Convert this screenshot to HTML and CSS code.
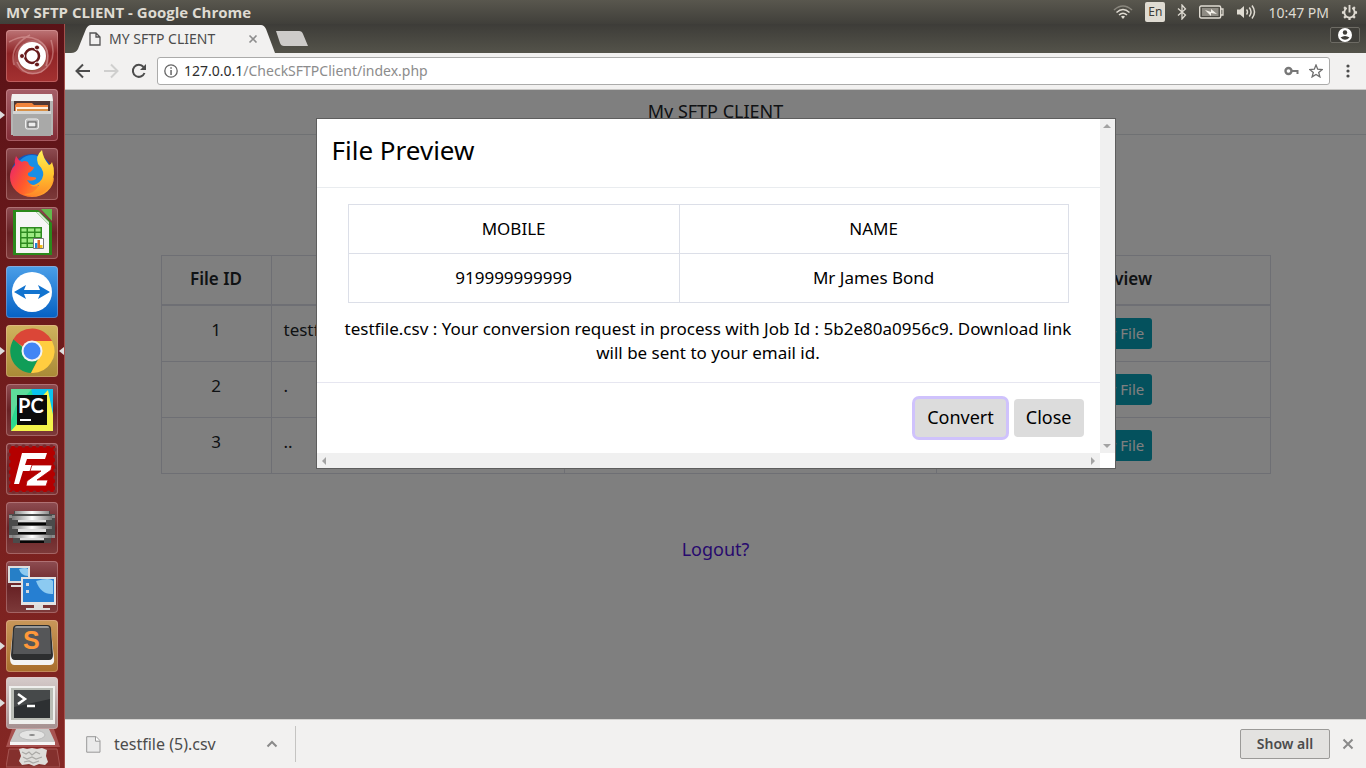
FILE: index.html
```html
<!DOCTYPE html>
<html lang="en">
<head>
<meta charset="utf-8">
<title>MY SFTP CLIENT</title>
<link rel="stylesheet" href="styles.css">
</head>
<body>
<header class="panel">
  <span class="panel-title">MY SFTP CLIENT - Google Chrome</span>
  <div class="indicators">
    <svg width="20" height="16" viewBox="0 0 20 16" fill="none" stroke="#dfdbd2" stroke-width="1.6"><path d="M1 6Q10-2 19 6" stroke="#8a877e"/><path d="M3.500 8.500Q10 2.500 16.500 8.500M6 11Q10 7.500 14 11"/><path d="M8 12.500Q10 11 12 12.500L10 15z" fill="#dfdbd2" stroke="none"/></svg>
    <span class="lang">En</span>
    <svg width="10" height="16" viewBox="0 0 10 16" fill="none" stroke="#dfdbd2" stroke-width="1.300"><path d="M1 4.500 8.500 11 5 15V1l3.500 4L1 11.500"/></svg>
    <svg width="25" height="14" viewBox="0 0 25 14"><rect x=".7" y="1" width="21" height="12" rx="1.500" fill="none" stroke="#dfdbd2" stroke-width="1.400"/><rect x="3" y="3" width="16.500" height="8" fill="#8e8b83"/><path d="M22 4h2v6h-2" fill="none" stroke="#dfdbd2" stroke-width="1.300"/><path d="M6 5l6 2V4l6 5-6-1v3z" fill="#f2efe8"/></svg>
    <svg width="20" height="16" viewBox="0 0 20 16" fill="none" stroke="#dfdbd2" stroke-width="1.500"><path d="M1 5.500h3L8 2v12l-4-3.500H1z" fill="#dfdbd2" stroke="none"/><path d="M10.500 5.500q2 2.500 0 5M13.300 3.500q3.500 4.500 0 9M16 1.500q5 6.500 0 13"/></svg>
    <time class="clock">10:47 PM</time>
    <svg width="17" height="17" viewBox="0 0 18 18" fill="none" stroke="#dfdbd2"><path d="M6 4.300a5.500 5.500 0 1 0 6 0" stroke-width="2"/><path d="M9 1v8" stroke-width="2"/><path d="M1 9h2.500M14.500 9H17M9 14.500V17M3.300 3.300l2 2M14.700 3.300l-2 2M3.300 14.700l2-2M14.700 14.700l-2-2" stroke-width="2.400"/></svg>
  </div>
</header>
<div class="desktop">
  <nav class="launcher" aria-label="Launcher">
    <button class="tile ubuntu" aria-label="Dash"><svg viewBox="0 0 52 52"><g fill="none" stroke="#e9b4b2" stroke-opacity=".45" stroke-width="1.500"><path d="M3 12Q18 3 32 10 46 18 40 36M8 35Q3 16 24 5M45 10Q52 32 35 42 18 48 11 32"/></g><path d="M8 35Q6 15 26 10 46 10 42 36 35 48 16 42z" fill="#fff" opacity=".16"/><circle cx="26" cy="27" r="14" fill="#752" opacity=".4"/><circle cx="26" cy="26" r="14" fill="#fff"/><circle cx="26" cy="26" r="7" fill="none" stroke="#67191a" stroke-width="2.600"/><g fill="#67191a" stroke="#fff" stroke-width="1"><circle cx="16" cy="26" r="2.500"/><circle cx="31" cy="17.500" r="2.500"/><circle cx="31" cy="34.500" r="2.500"/></g></svg></button>
    <button class="tile files running" aria-label="Files"><svg viewBox="0 0 52 52"><path d="M6 5h40l1 7v34H5V12z" fill="#b5b5b4"/><path d="M6 5h40l1 7H5z" fill="#f1f1f0"/><path d="M8 12h36v12H8z" fill="#4f3835"/><path d="M9 16l2-2h15l2 2h14v7H9z" fill="#f0843c"/><path d="M10 18h32v5H10z" fill="#fff0df"/><path d="M11 20h31v3H11z" fill="#d89147"/><path d="M7 22h38v25H7z" fill="#a9a9a8"/><path d="M7 22h38v3H7z" fill="#d5d5d4"/><rect x="19.500" y="30" width="13" height="10" rx="2" fill="#bbb" stroke="#eee"/><rect x="22" y="33" width="8" height="5" fill="#ececec" stroke="#555"/></svg></button>
    <button class="tile" aria-label="Firefox"><svg viewBox="0 0 52 52">
      <defs><linearGradient id="fox" x1="0" y1=".3" x2="1" y2=".8"><stop offset="0" stop-color="#ee2a63"/><stop offset=".4" stop-color="#ff5a2b"/><stop offset="1" stop-color="#ffb42a"/></linearGradient><linearGradient id="flame" x1="0" y1="0" x2="0" y2="1"><stop offset="0" stop-color="#fff05a"/><stop offset=".5" stop-color="#ffc72e"/><stop offset="1" stop-color="#ff8a28"/></linearGradient></defs>
      <circle cx="26" cy="27" r="21" fill="#1457bd"/><circle cx="26" cy="23" r="16" fill="#188fe6"/>
      <path d="M10 8q-2 5-1 9-5 5-5 12a22 20 0 0 0 44 0q-4 8-14 9-10 0-13-6 5 2 9-1 1-2-3-2-6 0-5-4 5-2 6-6-5 0-6-5-4-2-6 0-4-2-6-6z" fill="url(#fox)"/>
      <path d="M36 2q-7 6-4 14 8 8 4 15-5 7-12 6 4 3 9 0-5 10-16 9Q34 51 44 38q7-12 2-24-1 3-3 3-6-7-7-15z" fill="url(#flame)"/>
    </svg></button>
    <button class="tile" aria-label="LibreOffice Calc"><svg viewBox="0 0 52 52"><path d="M7 3h25l14 13v32H7z" fill="#2b8a1c"/><path d="M10 5h20l13 13v28H10z" fill="#f6f6f6"/><path d="M35 2h11v12z" fill="#62b84c"/><path d="M30 5l13 13V15L33 5z" fill="#d5e8d2"/><path d="M14 20h22v21H14z" fill="#2e8b20"/><path d="M15.500 21.500h5v3h-5zm6.500 0h6v3h-6zm7.500 0h5v3h-5zM15.500 26h5v4h-5zm6.500 0h6v4h-6zm7.500 0h5v4h-5zm-14 5.500h5v4h-5zm6.500 0h5v4h-5zM15.500 37h5v3h-5zm6.500 0h5v3h-5z" fill="#9dea83"/><path d="M27.500 31.500h10v10h-10z" fill="#fff" stroke="#777"/><path d="M29 36h2.500v5H29z" fill="#1d87d9"/><path d="M31.500 33H34v8h-2.500z" fill="#df6a22"/><path d="M34 38h2.500v3H34z" fill="#f4be19"/></svg></button>
    <button class="tile teamviewer" aria-label="TeamViewer"><svg viewBox="0 0 52 52"><circle cx="26" cy="26" r="20" fill="#fff"/><path d="M8 26l12-7-2 5h16l-2-5 12 7-12 7 2-5H18l2 5z" fill="#1173cf"/></svg></button>
    <button class="tile chrome running active" aria-label="Google Chrome"><svg viewBox="0 0 52 52"><path d="M26 26L6.500 15.500A22 22 0 0 1 46 16H26z" fill="#db4637"/><path d="M26 26h-5L7.500 14.500A22 22 0 0 0 25 48l8-16z" fill="#109d58"/><path d="M26 16h20A22 22 0 0 1 25 48l9-17z" fill="#ffcd40"/><circle cx="26" cy="26" r="10.500" fill="#f4f4f4"/><circle cx="26" cy="26" r="8.500" fill="#4285f4"/></svg></button>
    <button class="tile" aria-label="PyCharm"><svg viewBox="0 0 52 52"><path d="M5 5h42v42H5z" fill="#2bd990"/><path d="M25 5h22v23L35 40z" fill="#0ac3ef"/><path d="M5 47l12-14 25-27 5 25v16z" fill="#f3f34b"/><path d="M5 5h21L10 22 5 37z" fill="#5edb9a"/><path d="M11 11h30v30H11z" fill="#0b0b0b"/><text x="12" y="29" class="pc">PC</text><path d="M14 35h11v2H14z" fill="#fff"/></svg></button>
    <button class="tile" aria-label="FileZilla"><svg viewBox="0 0 52 52"><rect x="3" y="3" width="46" height="46" fill="#b40000"/><rect x="3" y="3" width="46" height="46" fill="none" stroke="#7b2a2c" stroke-width="3" stroke-linecap="round" stroke-dasharray="1 6"/><path d="M16 10h25l-2 6H21l-2 6h14l-2 6H17l-4 13H8z" fill="#fff"/><path d="M26 22h20l-1 5-14 10h11l-2 6H20l1-5 14-10H24z" fill="#fff" stroke="#b40000" stroke-width=".8"/></svg></button>
    <button class="tile" aria-label="Virtual server"><svg viewBox="0 0 52 52">
      <defs><linearGradient id="plate"><stop offset="0" stop-color="#777"/><stop offset=".5" stop-color="#fff"/><stop offset="1" stop-color="#777"/></linearGradient></defs>
      <path d="M8 9h36v3h5v24h-4v5H7v-5H3V12h5z" fill="#4b4b4b"/><path d="M3 13h3v3H3zm43 0h3v3h-3zM3 33h3v3H3zm43 0h3v3h-3z" fill="#8b8b8b"/>
      <path d="M9 9h34v3H9zM6 14h40v4H6zM6 24h40v3H6zM6 33h40v3H6z" fill="url(#plate)"/><path d="M12 18h28v2H12zM12 27h28v3H12zM14 36h24v2H14z" fill="#ddd"/><path d="M12 21h28v2H12zM12 30h28v2H12zM14 39h24v2H14z" fill="#050505"/>
    </svg></button>
    <button class="tile" aria-label="Remote desktop"><svg viewBox="0 0 52 52"><path d="M2 5h22v17H2z" fill="#ddd"/><path d="M4 7h18v13H4z" fill="#267fc7"/><path d="M13 8q7-2 9 0v7q-7 0-9-7z" fill="#8ccaf1"/><path d="M5 24h16v2H5z" fill="#ddd"/><path d="M15 16h35v28H15z" fill="#e3e3e3"/><path d="M17 18h31v23H17z" fill="#267fd2"/><path d="M30 20q14-4 17 0v13q-12 1-17-13z" fill="#8ccaf1"/><path d="M20 22h3v3h-3zm0 7h3v3h-3z" fill="#d2d8dd"/><path d="M28 44h9v3h7v2H20v-2h8z" fill="#ddd"/></svg></button>
    <button class="tile sublime running" aria-label="Sublime Text"><svg viewBox="0 0 52 52"><path d="M7 10l-3 28q0 7 4 7h36q5 0 4-7L45 10z" fill="#f4f4f4"/><path d="M11 5h30q4 0 4 4l2 26q0 5-4 5H9q-4 0-4-5L7 9q0-4 4-4z" fill="#2d2e2f"/><path d="M11 6h30q3 0 3 4l1 24H7L8 10q0-4 3-4z" fill="#555658"/><path d="M11 6h30q2 0 2 2H9q0-2 2-2z" fill="#999"/><text x="17" y="29" class="sub">S</text></svg></button>
    <button class="tile terminal running" aria-label="Terminal"><svg viewBox="0 0 52 52"><path d="M3 9h46v38H3z" fill="#efefed"/><path d="M5 11h42v32H5z" fill="#babdb6"/><path d="M8 13h36v28H8z" fill="#2d3032"/><path d="M8 13h36v9L8 30z" fill="#46494a"/><path d="M12 17l7 5-7 5" fill="none" stroke="#fff" stroke-width="2.500"/><path d="M21 29h8" stroke="#fff" stroke-width="2.500"/></svg></button>
    <svg class="stack" viewBox="0 0 54 42"><path d="M6 2h42l6 18H0z" fill="#a85351"/><path d="M10 2h33l6 13H4z" fill="#c9c9c8"/><path d="M4 15h45v3H4z" fill="#f6f6f5"/><ellipse cx="26" cy="8" rx="13" ry="5" fill="#e4e4e3" stroke="#bbb"/><ellipse cx="26" cy="8" rx="3" ry="1" fill="#888"/><path d="M3 22h48l3 18H0z" fill="#84302d" stroke="#a55552"/><path d="M13 22l4-1 4 1 5-1 5 1 5-1 5 2-1 6 2 6-3 3-6-1-5 2-5-2-7 1-3-4 2-5z" fill="#deddda"/><path d="M16 25l4 2 3-2 3 3 4-3 4 2M17 30l4 2 5-2 4 2 6-2M18 35l5-1 4 2 6-2" fill="none" stroke="#aaa9a6" stroke-width="1.200"/></svg>
  </nav>
  <section class="browser">
    <div class="tabstrip">
      <div class="tab">
        <svg class="tab-shape" viewBox="0 0 204 28" preserveAspectRatio="none"><path d="M0 28Q5 28 7 24L15 4Q17 0 20 0H190Q193 0 195 4L204 28z" fill="#f2f1f0"/></svg>
        <svg width="12" height="14" viewBox="0 0 12 14" fill="none" stroke="#555" stroke-width="1.300"><path d="M1 1h6l4 4v8H1zM7 1v4h4"/></svg>
        <span class="tab-name">MY SFTP CLIENT</span>
        <button class="plain" aria-label="Close tab"><svg width="10" height="10" viewBox="0 0 10 10" stroke="#8d8d8d" stroke-width="1.600"><path d="M1.500 1.500l7 7M8.500 1.500l-7 7"/></svg></button>
      </div>
      <button class="plain newtab" aria-label="New tab"><svg width="34" height="16" viewBox="0 0 34 16"><path d="M1 0h23q3 0 4 3l5 12H9q-3 0-4-3z" fill="#cdcbc9"/></svg></button>
      <button class="profile" aria-label="Profile"><svg width="14" height="14" viewBox="0 0 14 14"><circle cx="7" cy="7" r="7" fill="#fff"/><circle cx="7" cy="4.500" r="2.200" fill="#3f3e39"/><path d="M2.500 9.500Q7 6.500 11.500 9.500 7 14 2.500 9.500z" fill="#3f3e39"/></svg></button>
    </div>
    <div class="toolbar">
      <button class="plain" aria-label="Back"><svg width="16" height="16" viewBox="0 0 16 16" fill="none" stroke="#4c4c4c" stroke-width="2"><path d="M15 8H2M8 1.500L1.500 8 8 14.500"/></svg></button>
      <button class="plain" aria-label="Forward"><svg width="16" height="16" viewBox="0 0 16 16" fill="none" stroke="#cfcfce" stroke-width="2"><path d="M1 8h13M8 1.500L14.500 8 8 14.500"/></svg></button>
      <button class="plain" aria-label="Reload"><svg width="16" height="16" viewBox="0 0 16 16"><path d="M13.500 10A6 6 0 1 1 12.500 4" fill="none" stroke="#4c4c4c" stroke-width="2"/><path d="M15 1v6H9z" fill="#4c4c4c"/></svg></button>
      <div class="address">
        <svg width="14" height="14" viewBox="0 0 14 14"><circle cx="7" cy="7" r="6.200" fill="none" stroke="#666" stroke-width="1.300"/><path d="M6.300 6h1.500v5H6.300zM6.300 3.200h1.500v1.500H6.300z" fill="#666"/></svg>
        <span class="url"><b>127.0.0.1</b>/CheckSFTPClient/index.php</span>
        <svg width="15" height="10" viewBox="0 0 15 10"><circle cx="4.500" cy="5" r="3" fill="none" stroke="#777" stroke-width="2.400"/><path d="M7 4h7.500v4h-2V6H7z" fill="#777"/></svg>
        <svg width="14" height="14" viewBox="0 0 14 14" fill="none" stroke="#6e6e6e" stroke-width="1.300"><path d="M7 1l1.700 4.200 4.500.3-3.500 2.900 1.200 4.500L7 10.400l-3.900 2.500 1.200-4.500L.8 5.500l4.500-.3z"/></svg>
      </div>
      <button class="plain" aria-label="Menu"><svg width="4" height="14" viewBox="0 0 4 14" fill="#4c4c4c"><circle cx="2" cy="2" r="1.600"/><circle cx="2" cy="7" r="1.600"/><circle cx="2" cy="12" r="1.600"/></svg></button>
    </div>
    <main class="page">
      <div class="site-header">My SFTP CLIENT</div>
      <div class="container">
        <table class="files-table">
          <colgroup><col class="c-id"><col class="c-name"><col class="c-mid"><col></colgroup>
          <thead><tr><th>File ID</th><th></th><th></th><th>File Preview</th></tr></thead>
          <tbody>
            <tr><td>1</td><td class="left">testfile.csv</td><td></td><td><button class="view">Preview File</button></td></tr>
            <tr><td>2</td><td class="left">.</td><td></td><td><button class="view">Preview File</button></td></tr>
            <tr><td>3</td><td class="left">..</td><td></td><td><button class="view">Preview File</button></td></tr>
          </tbody>
        </table>
        <a class="logout" href="#">Logout?</a>
      </div>
      <div class="backdrop">
        <div class="modal" role="dialog" aria-labelledby="modal-title">
          <div class="modal-content">
            <h1 class="modal-title" id="modal-title">File Preview</h1>
            <div class="modal-body">
              <table class="preview">
                <colgroup><col class="c-mobile"><col></colgroup>
                <tbody><tr><td>MOBILE</td><td>NAME</td></tr>
                <tr><td>919999999999</td><td>Mr James Bond</td></tr></tbody>
              </table>
              <p class="message">testfile.csv : Your conversion request in process with Job Id : 5b2e80a0956c9. Download link will be sent to your email id.</p>
            </div>
            <div class="modal-footer"><button class="btn focused">Convert</button><button class="btn">Close</button></div>
          </div>
          <div class="bar vertical"><i class="arrow up"></i><i class="arrow down"></i></div>
          <div class="bar horizontal"><i class="arrow prev"></i><i class="arrow next"></i></div>
        </div>
      </div>
    </main>
    <footer class="downloads">
      <svg width="15" height="17" viewBox="0 0 15 17"><path d="M.7.700h9.500L14 4.700v11.500H.7z" fill="#eaeaea" stroke="#999"/><path d="M9.500.700v4.500H14" fill="#fff" stroke="#999"/></svg>
      <span class="download-name">testfile (5).csv</span>
      <button class="plain" aria-label="Download options"><svg width="12" height="8" viewBox="0 0 12 8" fill="none" stroke="#8a8a8a" stroke-width="2"><path d="M1.500 6.500L6 2l4.500 4.500"/></svg></button>
      <span class="divider"></span>
      <button class="showall">Show all</button>
      <button class="plain" aria-label="Close downloads"><svg width="12" height="12" viewBox="0 0 12 12" stroke="#8a8a8a" stroke-width="2"><path d="M1.500 1.500l9 9M10.500 1.500l-9 9"/></svg></button>
    </footer>
  </section>
</div>
</body>
</html>
```
FILE: styles.css
```css
* { box-sizing: border-box; }
html, body { height: 100%; }
body {
  margin: 0;
  display: flex;
  flex-direction: column;
  overflow: hidden;
  font-family: "Noto Sans", "Open Sans", sans-serif;
  font-size: 14px;
}
svg { display: block; flex: none; }
button { font-family: inherit; margin: 0; }
.plain { border: 0; padding: 0; background: none; }

.panel {
  flex: none;
  height: 24px;
  display: flex;
  align-items: center;
  justify-content: space-between;
  padding: 0 8px 0 6px;
  color: #dfdbd2;
  background: linear-gradient(#59574e, #403f3a);
}
.panel-title { font-family: "Open Sans", sans-serif; font-size: 15px; font-weight: 700; }
.indicators { display: flex; align-items: center; gap: 12px; }
.lang {
  width: 20px;
  line-height: 20px;
  border-radius: 2px;
  background: #dfdbd2;
  color: #3c3b37;
  font-size: 12px;
  text-align: center;
}
.clock { font-size: 14px; }

.desktop { flex: 1; min-height: 0; display: flex; }
.launcher {
  flex: none;
  width: 65px;
  padding: 6px 0 0 6px;
  display: flex;
  flex-direction: column;
  gap: 7px;
  background: linear-gradient(#5a1217, #7a211f 70%, #842724);
  border-right: 1px solid #a4504c;
  overflow: hidden;
}
.tile {
  position: relative;
  flex: none;
  width: 52px;
  height: 52px;
  padding: 0;
  border: 0;
  border-radius: 4px;
  background: linear-gradient(#8e4d52, #682225 50%, #7d3a3a);
  box-shadow: inset 0 0 0 1px rgba(255, 200, 200, .3);
}
.ubuntu { background: linear-gradient(#bc7476, #8f2426 45%, #a43131); }
.files { background: linear-gradient(#a55f68, #822c36); }
.teamviewer { background: linear-gradient(#4b9fe8, #0561c4); }
.chrome { background: linear-gradient(#d0b35e, #a98a36); }
.sublime { background: linear-gradient(#c9975a, #a86e2c); }
.terminal { background: linear-gradient(#d6cccb, #a58f8f); margin-top: -2px; }
.running::before, .active::after {
  content: "";
  position: absolute;
  top: 22px;
  left: -6px;
  border: 4px solid transparent;
  border-left: 5px solid #ddd;
  border-right: 0;
}
.active::after { left: 53px; border-left: 0; border-right: 5px solid #ddd; }
.stack { width: 54px; height: 42px; margin-top: -9px; }
.pc { font: 700 20px Lato, sans-serif; fill: #fff; }
.sub { font: 700 25px "Liberation Sans", sans-serif; fill: #ff983a; }

.browser { flex: 1; min-width: 0; display: flex; flex-direction: column; background: #f2f1f0; }
.tabstrip {
  flex: none;
  height: 29px;
  display: flex;
  align-items: flex-end;
  padding: 0 6px;
  background: linear-gradient(#3d3c38, #54534a);
}
.tab {
  position: relative;
  width: 204px;
  height: 28px;
  padding: 0 17px 0 18px;
  display: flex;
  align-items: center;
  gap: 8px;
  color: #4c4c4c;
}
.tab-shape { position: absolute; inset: 0; width: 100%; height: 100%; }
.tab > :not(.tab-shape) { position: relative; }
.tab-name { flex: 1; font-size: 14px; line-height: 18px; white-space: nowrap; }
.newtab { align-self: center; }
.profile {
  align-self: flex-start;
  margin: 3px 0 0 auto;
  width: 30px;
  height: 16px;
  padding: 0;
  display: grid;
  place-items: center;
  border: 1px solid #6d6b64;
  border-radius: 2px;
  background: #3f3e39;
}
.toolbar {
  flex: none;
  height: 37px;
  display: flex;
  align-items: center;
  gap: 12px;
  padding: 0 16px 0 10px;
  border-bottom: 1px solid #c9c8c6;
}
.address {
  flex: 1;
  height: 28px;
  margin: 0 4px 0 -2px;
  padding: 0 6px;
  display: flex;
  align-items: center;
  gap: 6px;
  border: 1px solid #ababaa;
  border-radius: 3px;
  background: #fff;
}
.address svg:last-child { margin-left: 4px; }
.url { flex: 1; color: #8c8c8c; font-size: 14px; line-height: 18px; }
.url b { color: #2e2e2e; font-weight: 400; }

.page {
  position: relative;
  flex: 1;
  min-height: 0;
  overflow: hidden;
  background: #fff;
  color: #212529;
  font-size: 17px;
  line-height: 24px;
  text-align: center;
}
.site-header { padding: 9px 0 11px; border-bottom: 1px solid #dee2e6; font-size: 18px; }
.container { max-width: 1110px; margin: 120px auto 0; }
table { width: 100%; border-collapse: collapse; table-layout: fixed; }
th, td { padding: 12px; border: 1px solid #dcdfe8; vertical-align: top; }
th { padding: 11px 12px; font-weight: 600; }
.files-table td { height: 56px; }
.files-table th { border-bottom-width: 2px; height: 49px; }
.c-id { width: 110px; }
.c-name { width: 293px; }
.c-mid { width: 372px; }
.left { text-align: left; }
.view {
  display: block;
  height: 31px;
  margin: 0 auto;
  padding: 0 8px;
  border: 0;
  border-radius: 3px;
  background: #08a2bb;
  color: #fff;
  font-size: 15px;
}
.logout { display: inline-block; margin-top: 63px; color: #5014dc; font-size: 18px; text-decoration: none; }

.backdrop {
  position: absolute;
  inset: 0;
  display: flex;
  justify-content: center;
  align-items: flex-start;
  padding-top: 28px;
  background: rgba(0, 0, 0, .5);
}
.modal {
  width: 100%;
  max-width: 800px;
  display: grid;
  grid-template-columns: 1fr 15px;
  border: 1px solid #5e5e5e;
  background: #fff;
  color: #000;
}
.modal-title {
  margin: 0;
  padding: 16px 15px 21px;
  border-bottom: 1px solid #e9ecef;
  font-size: 26px;
  font-weight: 400;
  line-height: 31px;
  text-align: left;
}
.modal-body { display: flex; flex-direction: column; padding: 16px 15px 17px; }
.preview { width: auto; margin: 0 16px; }
.c-mobile { width: 46%; }
.message { margin: 14px 0 0; }
.modal-footer {
  display: flex;
  justify-content: flex-end;
  gap: 8px;
  padding: 16px;
  border-top: 1px solid #e6e6f0;
}
.btn {
  height: 38px;
  padding: 0 12px 2px;
  border: 0;
  border-radius: 4px;
  background: #dcdcdc;
  color: #000;
  font-size: 18px;
}
.focused { box-shadow: 0 0 0 3px #cfc2fc; }
.bar { display: flex; justify-content: space-between; background: #f0f0f0; }
.vertical { flex-direction: column; align-items: center; padding: 5px 0; }
.horizontal { align-items: center; height: 15px; padding: 0 5px; }
.arrow { border: 4px solid transparent; }
.up { border-top: 0; border-bottom-color: #a3a3a3; }
.down { border-bottom: 0; border-top-color: #a3a3a3; }
.prev { border-left: 0; border-right-color: #a3a3a3; }
.next { border-right: 0; border-left-color: #a3a3a3; }

.downloads {
  flex: none;
  height: 49px;
  display: flex;
  align-items: center;
  padding: 0 12px 0 21px;
  border-top: 1px solid #d4d3d1;
  color: #4c4c4c;
}
.download-name { width: 153px; padding-left: 13px; font-size: 16px; white-space: nowrap; }
.download-name + .plain { margin-left: 12px; }
.divider { width: 1px; height: 36px; margin: 0 auto 0 17px; background: #c5c4c2; }
.showall {
  width: 90px;
  height: 30px;
  margin-right: 12px;
  padding: 0 0 2px;
  border: 1px solid #9b9a98;
  border-radius: 2px;
  background: #e3e2e0;
  color: #4c4c4c;
  font-size: 14px;
  font-weight: 600;
}
```
